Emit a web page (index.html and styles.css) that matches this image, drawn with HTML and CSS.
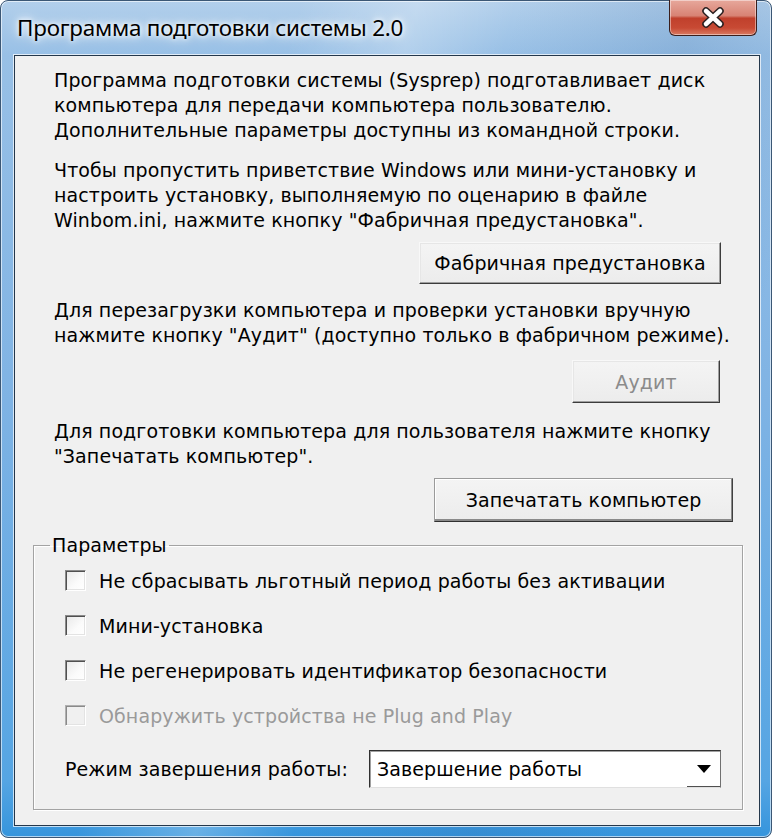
FILE: index.html
```html
<!DOCTYPE html>
<html lang="ru">
<head>
<meta charset="utf-8">
<title>Программа подготовки системы 2.0</title>
<link rel="stylesheet" href="styles.css">
</head>
<body>
<div class="window">
  <div class="titlebar">
    <span class="title">Программа подготовки системы 2.0</span>
    <div class="close">
      <svg width="24" height="21" viewBox="0 0 24 21">
        <path d="M5 4 L19 17 M19 4 L5 17" stroke="#2a2020" stroke-width="7.5" stroke-linecap="round" fill="none"/>
        <path d="M5 4 L19 17 M19 4 L5 17" stroke="#ffffff" stroke-width="4.5" stroke-linecap="round" fill="none"/>
      </svg>
    </div>
  </div>
  <div class="client">
    <p class="para p1">Программа подготовки системы (Sysprep) подготавливает диск<br>компьютера для передачи компьютера пользователю.<br>Дополнительные параметры доступны из командной строки.</p>
    <p class="para p2">Чтобы пропустить приветствие Windows или мини-установку и<br>настроить установку, выполняемую по оценарию в файле<br>Winbom.ini, нажмите кнопку "Фабричная предустановка".</p>
    <div class="btnrow r1"><div class="btn btn-factory">Фабричная предустановка</div></div>
    <p class="para p3">Для перезагрузки компьютера и проверки установки вручную<br>нажмите кнопку "Аудит" (доступно только в фабричном режиме).</p>
    <div class="btnrow r2"><div class="btn btn-audit disabled">Аудит</div></div>
    <p class="para p4">Для подготовки компьютера для пользователя нажмите кнопку<br>"Запечатать компьютер".</p>
    <div class="btnrow r3"><div class="btn btn-seal">Запечатать компьютер</div></div>
    <fieldset class="group">
      <legend class="legend">Параметры</legend>
      <div class="check"><span class="box"></span><span class="label">Не сбрасывать льготный период работы без активации</span></div>
      <div class="check"><span class="box"></span><span class="label">Мини-установка</span></div>
      <div class="check"><span class="box"></span><span class="label">Не регенерировать идентификатор безопасности</span></div>
      <div class="check disabled"><span class="box"></span><span class="label">Обнаружить устройства не Plug and Play</span></div>
      <div class="moderow">
        <span class="modelabel">Режим завершения работы:</span>
        <div class="combo"><span class="combotext">Завершение работы</span><span class="arrowbtn"><span class="arrow"></span></span></div>
      </div>
    </fieldset>
  </div>
</div>
</body>
</html>
```
FILE: styles.css
```css
html, body {
  margin: 0;
  padding: 0;
  background: #ffffff;
}
body {
  font-family: "DejaVu Sans", "Liberation Sans", sans-serif;
  color: #000;
}
.window {
  width: 772px;
  height: 838px;
  box-sizing: border-box;
  border: 1px solid #3b5775;
  border-radius: 8px;
  background:
    linear-gradient(105deg, rgba(255,255,255,0) 30%, rgba(255,255,255,0.25) 42%, rgba(255,255,255,0) 52%, rgba(40,90,150,0.15) 70%, rgba(255,255,255,0) 85%),
    linear-gradient(to bottom, #b2cfeb 0px, #98c0e6 54px, #7fb3e4 400px, #55a5e3 780px, #3494dc 838px);
  display: flex;
  flex-direction: column;
  box-shadow: inset 0 0 0 1px rgba(255,255,255,0.6);
}
.titlebar {
  height: 54px;
  display: flex;
  align-items: flex-start;
  justify-content: space-between;
}
.title {
  font-family: "Noto Sans", "Open Sans", sans-serif;
  font-size: 22.4px;
  line-height: 28px;
  margin: 13px 0 0 16px;
  color: #000;
  letter-spacing: -0.2px;
  text-shadow: 0 0 8px #fff, 0 0 14px rgba(255,255,255,0.9), 0 0 4px #fff;
}
.close {
  width: 88px;
  height: 36px;
  margin-right: 14px;
  margin-top: -1px;
  box-sizing: border-box;
  border: 1px solid #3a1e1c;
  border-top: none;
  border-radius: 0 0 6px 6px;
  background: linear-gradient(to bottom, #e7a89c 0%, #d88374 45%, #c0402c 52%, #c84a34 80%, #d87a62 100%);
  box-shadow: inset 0 0 0 1px rgba(255,255,255,0.45);
  display: flex;
  align-items: center;
  justify-content: center;
}
.client {
  flex: 1;
  margin: 0 11px 11px 13px;
  border: 1px solid #24374b;
  background: #f0f0f0;
  box-shadow: 0 0 0 1px rgba(255,255,255,0.7);
  padding: 12px 0 0 39px;
  display: flex;
  flex-direction: column;
}
.para {
  margin: 0;
  font-size: 19px;
  line-height: 25px;
  letter-spacing: 0.1px;
  white-space: nowrap;
}
.p2 { margin-top: 15px; }
.p3 { margin-top: 14px; }
.p4 { margin-top: 16px; }
.btnrow {
  display: flex;
  justify-content: flex-end;
}
.r1 { margin-top: 9px; padding-right: 38px; }
.r2 { margin-top: 12px; padding-right: 39px; }
.r3 { margin-top: 9px; padding-right: 26px; }
.btn {
  box-sizing: border-box;
  display: flex;
  align-items: center;
  justify-content: center;
  font-size: 19px;
  letter-spacing: 0.1px;
  background: linear-gradient(to bottom, #f4f4f4, #ececec);
  border: 1px solid;
  border-color: #f8f8f8 #3c3c3c #3c3c3c #f8f8f8;
  box-shadow: inset -1px -1px 0 #a0a0a0, inset 1px 1px 0 #e6e6e6;
}
.btn-factory { width: 302px; height: 42px; }
.btn-audit { width: 148px; height: 43px; }
.btn-seal {
  width: 299px;
  height: 44px;
  border-color: #9a9a9a #404040 #303030 #9a9a9a;
  box-shadow: inset -1px -2px 0 #8a8a8a, inset 1px 1px 0 #ffffff;
}
.btn.disabled { color: #8b8b8b; }
.group {
  flex: none;
  margin: 11px 16px 0 -21px;
  padding: 0 0 0 31px;
  border: 1px solid #a3a3a3;
  box-shadow: inset 1px 1px 0 #fff, 1px 1px 0 #fff;
  height: 275px;
  box-sizing: content-box;
  min-width: 0;
}
.legend {
  font-size: 19px;
  line-height: 25px;
  letter-spacing: 0.1px;
  padding: 0 2px;
  margin-left: -15px;
}
.check {
  height: 45px;
  display: flex;
  align-items: center;
  font-size: 19px;
  letter-spacing: 0.1px;
  white-space: nowrap;
}
.box {
  width: 21px;
  height: 21px;
  flex: none;
  box-sizing: border-box;
  border: 1px solid;
  border-color: #8a8a8a #ffffff #ffffff #8a8a8a;
  box-shadow: inset 1px 1px 0 #505050, inset -1px -1px 0 #e3e3e3;
  background: linear-gradient(135deg, #e8e8e8 0%, #fbfbfb 60%, #ffffff 100%);
  margin-right: 13px;
}
.check.disabled .label { color: #9a9a9a; }
.check.disabled .box {
  border-color: #b0b0b0 #ffffff #ffffff #b0b0b0;
  box-shadow: inset 1px 1px 0 #8a8a8a, inset -1px -1px 0 #e3e3e3;
  background: #f0f0f0;
}
.moderow {
  margin-top: 12px;
  display: flex;
  align-items: center;
  font-size: 19px;
  letter-spacing: 0.1px;
  white-space: nowrap;
}
.modelabel { width: 304px; flex: none; }
.combo {
  width: 352px;
  height: 38px;
  box-sizing: border-box;
  background: #fff;
  border: 1px solid;
  border-color: #303030 #707070 #e0e0e0 #303030;
  box-shadow: inset 1px 1px 0 #a0a0a0;
  display: flex;
  align-items: center;
  justify-content: space-between;
}
.combotext { padding-left: 7px; }
.arrowbtn {
  align-self: stretch;
  width: 33px;
  box-sizing: border-box;
  border-bottom: 1px solid #505050;
  display: flex;
  align-items: center;
  justify-content: center;
}
.arrow {
  width: 0;
  height: 0;
  border-left: 7px solid transparent;
  border-right: 7px solid transparent;
  border-top: 8px solid #000;
}
```
